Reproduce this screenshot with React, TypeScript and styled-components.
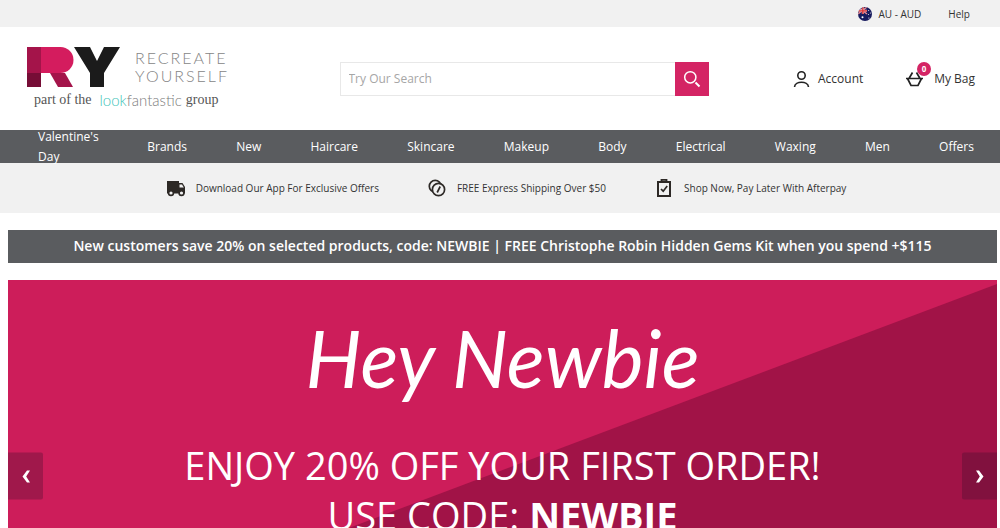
import React from "react";
import styled, { createGlobalStyle } from "styled-components";

const colors = {
  pink: "#cd1d5a",
  button: "#d42464",
  slate: "#5a5c5f",
  pale: "#f1f1f1",
  ink: "#333333",
};

const GlobalStyle = createGlobalStyle`
  *, *::before, *::after { box-sizing: border-box; }
  body {
    margin: 0;
    background: #ffffff;
    color: ${colors.ink};
    font: 12px/20px "Open Sans", "Noto Sans", sans-serif;
  }
  a { color: inherit; text-decoration: none; }
  button { border: 0; padding: 0; cursor: pointer; font: inherit; }
`;

const TopBar = styled.div`
  display: flex;
  justify-content: flex-end;
  align-items: center;
  gap: 27px;
  height: 27px;
  padding: 0 30px;
  background: ${colors.pale};
  font-size: 10px;
`;

const TopLink = styled.a`
  display: flex;
  align-items: center;
  gap: 6px;
`;

const Header = styled.header`
  display: flex;
  justify-content: space-between;
  align-items: center;
  height: 103px;
  padding: 0 25px 0 26px;
`;

const Logo = styled.a`
  display: flex;
  flex-direction: column;
  flex: 0 0 229px;
`;

const LogoTop = styled.span`
  display: flex;
  align-items: center;
  gap: 14px;
`;

const Wordmark = styled.span`
  color: #858585;
  font: 300 16px/18px Lato, sans-serif;
  letter-spacing: 2px;
`;

const LogoTagline = styled.span`
  display: flex;
  align-items: center;
  gap: 8px;
  padding-left: 8px;
  color: #555555;
  font: 14px/24px "Liberation Serif", serif;
`;

const Partner = styled.span`
  display: flex;
  align-items: center;
`;

const GroupWord = styled.span`
  padding-left: 4px;
`;

const PartnerName = styled.span<{ $tint?: string }>`
  color: ${(p) => p.$tint ?? "#7c7c7c"};
  font: 300 15px/24px Lato, sans-serif;
`;

const SearchForm = styled.form`
  display: flex;
  flex: 0 1 369px;
  height: 34px;
`;

const SearchInput = styled.input`
  flex: 1;
  min-width: 0;
  padding: 0 8px;
  border: 1px solid #e8e8e8;
  border-right: 0;
  border-radius: 0;
  color: ${colors.ink};
  font: 12px/20px "Open Sans", sans-serif;
  &::placeholder { color: #a6a6a6; opacity: 1; }
`;

const SearchButton = styled.button`
  display: flex;
  align-items: center;
  justify-content: center;
  width: 34px;
  background: ${colors.button};
`;

const Actions = styled.div`
  display: flex;
  justify-content: space-between;
  flex: 0 0 182px;
`;

const Action = styled.a`
  display: flex;
  align-items: center;
  gap: 8px;
`;

const BagIcon = styled.span`
  position: relative;
  display: flex;
  padding-right: 3px;
`;

const Badge = styled.span`
  position: absolute;
  top: -8px;
  right: -5px;
  width: 14px;
  height: 14px;
  border-radius: 50%;
  background: ${colors.button};
  color: #ffffff;
  font-size: 8px;
  font-weight: 700;
  line-height: 14px;
  text-align: center;
`;

const Nav = styled.nav`
  display: flex;
  justify-content: space-between;
  align-items: center;
  height: 33px;
  padding: 0 26px 0 38px;
  background: ${colors.slate};
  color: #ffffff;
`;

const NavLink = styled.a<{ $wrap?: boolean }>`
  width: ${(p) => (p.$wrap ? "60px" : "auto")};
  white-space: ${(p) => (p.$wrap ? "normal" : "nowrap")};
`;

const Benefits = styled.div`
  display: flex;
  justify-content: center;
  align-items: center;
  gap: 48px;
  height: 50px;
  padding-left: 12px;
  background: ${colors.pale};
  font-size: 10px;
`;

const Benefit = styled.a`
  display: flex;
  align-items: center;
  gap: 10px;
`;

const IconSlot = styled.span`
  display: flex;
  justify-content: center;
  width: 20px;
`;

const Main = styled.main`
  display: flex;
  flex-direction: column;
  gap: 17px;
  padding: 17px 3px 17px 8px;
`;

const Promo = styled.a`
  padding: 6px 8px 7px;
  background: ${colors.slate};
  color: #ffffff;
  font-size: 14px;
  font-weight: 600;
  text-align: center;
`;

const Hero = styled.section`
  position: relative;
  min-height: 392px;
  padding-top: 26px;
  background: ${colors.pink};
  color: #ffffff;
  text-align: center;
  &::before {
    content: "";
    position: absolute;
    inset: 0;
    background: #a11347;
    clip-path: polygon(100% 1%, 100% 100%, 0 100%, 0 96%);
  }
`;

const HeroCopy = styled.div`
  position: relative;
`;

const HeroTitle = styled.h1`
  margin: 0;
  font: italic 400 79px/104px Lato, sans-serif;
`;

const HeroText = styled.p`
  margin: 0;
  padding-top: 30px;
  font-size: 38px;
  line-height: 50px;
`;

const Arrow = styled.button<{ $side: "left" | "right" }>`
  position: absolute;
  top: 50%;
  ${(p) => p.$side}: 0;
  display: flex;
  align-items: center;
  justify-content: center;
  width: 35px;
  height: 47px;
  transform: translateY(-50%);
  border-radius: ${(p) => (p.$side === "left" ? "0 2px 2px 0" : "2px 0 0 2px")};
  background: rgba(51, 13, 43, 0.29);
`;

const navItems = ["Valentine's Day", "Brands", "New", "Haircare", "Skincare", "Makeup", "Body", "Electrical", "Waxing", "Men", "Offers"];

const Flag = () => (
  <svg width="14" height="14" viewBox="0 0 14 14" aria-hidden="true">
    <clipPath id="round"><circle cx="7" cy="7" r="7" /></clipPath>
    <g clipPath="url(#round)">
      <rect width="14" height="14" fill="#171b5e" />
      <path d="M0 0L9 7M9 0L0 7" stroke="#e58a94" strokeWidth="1.4" />
      <path d="M4.8 0V7M0 3.8H9" stroke="#f3c9cd" strokeWidth="2" />
      <path d="M4.8 0V7M0 3.8H9" stroke="#d33" strokeWidth="1.3" />
      <g fill="#ffffff"><circle cx="4.5" cy="10.3" r="1" /><circle cx="10.7" cy="3.5" r=".5" /><circle cx="12.4" cy="6" r=".5" /><circle cx="10.4" cy="7.6" r=".5" /><circle cx="10.9" cy="11" r=".6" /></g>
    </g>
  </svg>
);

const Mark = () => (
  <svg width="95" height="42" viewBox="0 0 95 42" role="img" aria-label="RY">
    <path d="M15 1H34.500A13 13 0 0 1 34.500 27H15Z" fill="#d41c5e" />
    <path d="M1 1H15V27H1Z" fill="#a4144a" />
    <path d="M1 27H15V41H1Z" fill="#760d36" />
    <path d="M24 27H39L47 41H32Z" fill="#a4144a" />
    <path d="M48 1H64L71 15 78 1H94L78 27V41H64V27Z" fill="#1b1b1b" />
  </svg>
);

const BenefitIcon = ({ kind }: { kind: "truck" | "coins" | "clipboard" }) => {
  if (kind === "truck")
    return (
      <svg width="20" height="18" viewBox="0 0 20 18" aria-hidden="true">
        <path d="M1 2H13V4H16.500L19 8V14.500H1Z" fill="#2d2926" />
        <path d="M13.500 5.500H16L17.800 8.500H13.500Z" fill={colors.pale} />
        <g fill={colors.pale} stroke="#2d2926" strokeWidth="1.600"><circle cx="5" cy="14" r="2.400" /><circle cx="15.500" cy="14" r="2.400" /></g>
      </svg>
    );
  if (kind === "coins")
    return (
      <svg width="18" height="18" viewBox="0 0 18 18" aria-hidden="true" fill={colors.pale} stroke="#2d2926" strokeWidth="1.700">
        <circle cx="7.200" cy="7.200" r="5.900" />
        <circle cx="10.500" cy="10.500" r="6.100" />
        <path d="M12.200 7.500L9.200 13.500" />
      </svg>
    );
  return (
    <svg width="16" height="20" viewBox="0 0 16 20" aria-hidden="true" fill="none" stroke="#2d2926">
      <path d="M2 4H14V18H2Z" strokeWidth="2" />
      <path d="M5.500 4V1.800H10.500V4" strokeWidth="1.800" />
      <path d="M5 11L7.200 13.200 11.200 8" strokeWidth="1.700" />
    </svg>
  );
};

const Chevron = ({ flip }: { flip?: boolean }) => (
  <svg width="10" height="14" viewBox="0 0 10 14" aria-hidden="true">
    <path d={flip ? "M1 1H4L8.500 7 4 13H1L4.800 7Z" : "M9 1H6L1.500 7 6 13H9L5.200 7Z"} fill="#ffffff" />
  </svg>
);

export default function App() {
  return (
    <>
      <GlobalStyle />
      <TopBar>
        <TopLink href="#region"><Flag />AU - AUD</TopLink>
        <TopLink href="#help">Help</TopLink>
      </TopBar>
      <Header>
        <Logo href="#home">
          <LogoTop>
            <Mark />
            <Wordmark>RECREATE<br />YOURSELF</Wordmark>
          </LogoTop>
          <LogoTagline>
            part of the
            <Partner>
              <PartnerName $tint="#3fc4b8">look</PartnerName>
              <PartnerName>fantastic</PartnerName>
              <GroupWord>group</GroupWord>
            </Partner>
          </LogoTagline>
        </Logo>
        <SearchForm role="search">
          <SearchInput type="search" aria-label="Search" placeholder="Try Our Search" />
          <SearchButton type="submit" aria-label="Submit search">
            <svg width="18" height="18" viewBox="0 0 18 18" fill="none" stroke="#ffffff" strokeWidth="1.500" aria-hidden="true">
              <circle cx="7.300" cy="7.300" r="5.600" />
              <path d="M12.500 12.500L16.500 16.500" strokeWidth="2" />
            </svg>
          </SearchButton>
        </SearchForm>
        <Actions>
          <Action href="#account">
            <svg width="17" height="18" viewBox="0 0 17 18" fill="none" stroke="#222222" strokeWidth="1.600" aria-hidden="true">
              <circle cx="8.500" cy="5.500" r="3.700" />
              <path d="M1.500 17C2 10.700 15 10.700 15.500 17" />
            </svg>
            Account
          </Action>
          <Action href="#bag">
            <BagIcon>
              <svg width="18" height="18" viewBox="0 0 18 18" fill="none" stroke="#222222" strokeWidth="1.700" aria-hidden="true">
                <path d="M1 8.500H18M2.500 8.500L6 15.500H13L16.500 8.500M4 8.500L7.500 2.500M15 8.500L11.500 2.500" />
              </svg>
              <Badge>0</Badge>
            </BagIcon>
            My Bag
          </Action>
        </Actions>
      </Header>
      <Nav aria-label="Departments">
        {navItems.map((item, i) => (
          <NavLink key={item} href="#shop" $wrap={i === 0}>{item}</NavLink>
        ))}
      </Nav>
      <Benefits>
        <Benefit href="#app"><IconSlot><BenefitIcon kind="truck" /></IconSlot>Download Our App For Exclusive Offers</Benefit>
        <Benefit href="#shipping"><IconSlot><BenefitIcon kind="coins" /></IconSlot>FREE Express Shipping Over $50</Benefit>
        <Benefit href="#afterpay"><IconSlot><BenefitIcon kind="clipboard" /></IconSlot>Shop Now, Pay Later With Afterpay</Benefit>
      </Benefits>
      <Main>
        <Promo href="#offer">
          New customers save 20% on selected products, code: NEWBIE | FREE Christophe Robin Hidden Gems Kit when you spend +$115
        </Promo>
        <Hero>
          <HeroCopy>
            <HeroTitle>Hey Newbie</HeroTitle>
            <HeroText>
              ENJOY 20% OFF YOUR FIRST ORDER!<br />
              USE CODE: <strong>NEWBIE</strong>
            </HeroText>
          </HeroCopy>
          <Arrow type="button" $side="left" aria-label="Previous slide"><Chevron /></Arrow>
          <Arrow type="button" $side="right" aria-label="Next slide"><Chevron flip /></Arrow>
        </Hero>
      </Main>
    </>
  );
}
